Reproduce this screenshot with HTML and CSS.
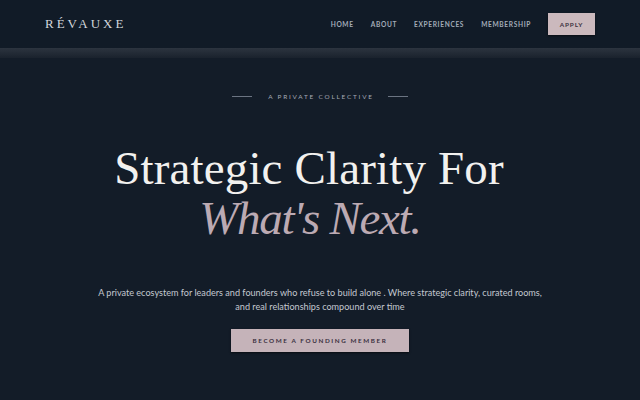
FILE: index.html
```html
<!DOCTYPE html>
<html>
<head>
<meta charset="utf-8">
<link rel="stylesheet" href="styles.css">
</head>
<body>
<header class="topbar">
  <div class="logo">RÉVAUXE</div>
  <nav class="nav">
    <a class="nav-link">HOME</a>
    <a class="nav-link">ABOUT</a>
    <a class="nav-link">EXPERIENCES</a>
    <a class="nav-link">MEMBERSHIP</a>
    <a class="apply">APPLY</a>
  </nav>
</header>
<div class="band"></div>
<main class="hero">
  <div class="eyebrow"><span class="rule"></span><span class="eyebrow-text">A PRIVATE COLLECTIVE</span><span class="rule"></span></div>
  <h1 class="title"><span class="line1">Strategic Clarity For</span><span class="line2">What's Next.</span></h1>
  <p class="lead">A private ecosystem for leaders and founders who refuse to build alone . Where strategic clarity, curated rooms,<br>and real relationships compound over time</p>
  <a class="cta">BECOME A FOUNDING MEMBER</a>
</main>
</body>
</html>
```
FILE: styles.css
```css
html, body { margin: 0; padding: 0; }
body {
  width: 640px;
  height: 400px;
  overflow: hidden;
  background: #131c28;
  font-family: "Lato", "Inter", sans-serif;
}
.topbar {
  height: 48px;
  background: #111b27;
  display: flex;
  align-items: center;
  justify-content: space-between;
  padding: 0 45px;
  box-sizing: border-box;
}
.logo {
  font-family: "Liberation Serif", serif;
  font-size: 13px;
  letter-spacing: 3px;
  color: #d2d6dc;
}
.nav {
  display: flex;
  align-items: center;
}
.nav-link {
  font-size: 6.6px;
  font-weight: 700;
  letter-spacing: 0.65px;
  color: #a3abb8;
  margin-right: 17px;
}
.apply {
  width: 47px;
  height: 22px;
  display: flex;
  align-items: center;
  justify-content: center;
  background: #cbb9bd;
  color: #3b3340;
  font-size: 6.4px;
  font-weight: 700;
  letter-spacing: 0.9px;
  box-shadow: 0 1px 2px rgba(0,0,0,0.5);
}
.band {
  height: 10px;
  background: linear-gradient(#2c343f, #1a222d);
}
.hero {
  display: flex;
  flex-direction: column;
  align-items: center;
  text-align: center;
}
.eyebrow {
  display: flex;
  align-items: center;
  margin-top: 35px;
}
.rule {
  width: 20px;
  height: 1px;
  background: #6b7482;
}
.eyebrow-text {
  font-size: 6.4px;
  letter-spacing: 1.8px;
  color: #a3aab6;
  margin: 0 14px 0 16px;
}
.title {
  margin: 43px 0 0 0;
  padding-right: 22px;
  font-family: "Liberation Serif", serif;
  font-weight: normal;
  display: flex;
  flex-direction: column;
  align-items: center;
}
.line1 {
  font-size: 47px;
  line-height: 50px;
  color: #f2f1ef;
  letter-spacing: 0.15px;
}
.line2 {
  font-size: 47px;
  line-height: 51px;
  font-style: italic;
  color: #bcaab3;
  letter-spacing: -1.3px;
  margin-left: 2px;
}
.lead {
  margin: 42px 0 0 0;
  font-size: 9.1px;
  line-height: 14px;
  color: #c3c8d0;
}
.cta {
  margin-top: 15px;
  width: 178px;
  height: 23px;
  display: flex;
  align-items: center;
  justify-content: center;
  background: #c5b3b9;
  color: #3a3040;
  font-size: 6.3px;
  font-weight: 700;
  letter-spacing: 1.6px;
  box-shadow: 0 1px 2px rgba(0,0,0,0.6);
}
```
